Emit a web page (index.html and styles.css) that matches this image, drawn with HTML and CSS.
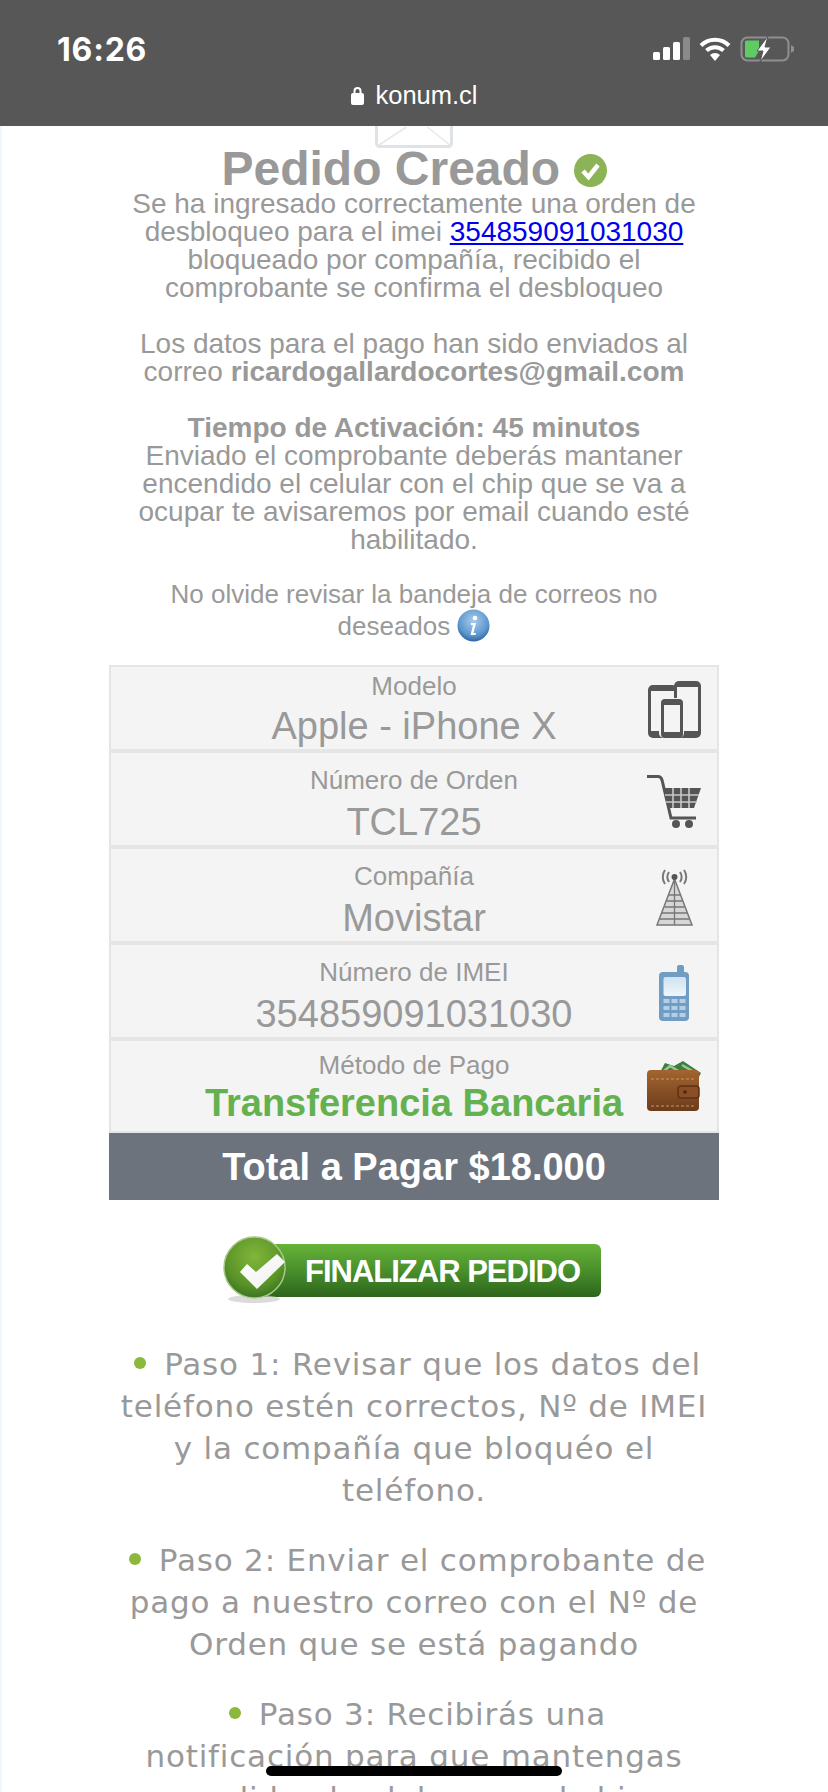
FILE: index.html
```html
<!DOCTYPE html>
<html>
<head>
  <title>Pedido Creado</title>
  <link rel="stylesheet" href="styles.css">
</head>
<body>
  <header class="status-bar">
    <div class="status-top">
      <span class="time">16:26</span>
      <div class="status-icons">
        <svg width="37" height="24" viewBox="0 0 37 24">
          <rect x="0" y="15" width="7" height="8" rx="1.500" fill="#fff"/>
          <rect x="10" y="10" width="7" height="13" rx="1.500" fill="#fff"/>
          <rect x="20" y="5" width="7" height="18" rx="1.500" fill="#fff"/>
          <rect x="30" y="0" width="7" height="23" rx="1.500" fill="#8a8a8a"/>
        </svg>
        <svg width="32" height="24" viewBox="0 0 32 24">
          <path d="M2 8.500 A20 20 0 0 1 30 8.500" fill="none" stroke="#fff" stroke-width="4"/>
          <path d="M7.500 13.500 A12.500 12.500 0 0 1 24.500 13.500" fill="none" stroke="#fff" stroke-width="4"/>
          <path d="M11 18 L16 24 L21 18 A7 7 0 0 0 11 18 Z" fill="#fff"/>
        </svg>
        <svg width="54" height="26" viewBox="0 0 54 26">
          <rect x="1.500" y="1.500" width="47" height="23" rx="6" fill="none" stroke="#8f8f8f" stroke-width="2"/>
          <path d="M51 9 L54 11 V15 L51 17 Z" fill="#8f8f8f"/>
          <path d="M5 6 a1.500 1.500 0 0 1 1.500 -1.500 H19 V15 L15 21.500 H6.500 a1.500 1.500 0 0 1 -1.500 -1.500 Z" fill="#5ecb63"/>
          <path d="M28 0 L17 15 H23 L20 26 L31 11 H25 Z" fill="#fff" stroke="#575757" stroke-width="1"/>
        </svg>
      </div>
    </div>
    <div class="url-row">
      <svg width="13" height="19" viewBox="0 0 13 19">
        <path d="M3.500 8 V5 a3 3 0 0 1 6 0 V8" fill="none" stroke="#fff" stroke-width="2"/>
        <rect x="0" y="7" width="13" height="12" rx="2" fill="#fff"/>
      </svg>
      <span>konum.cl</span>
    </div>
  </header>

  <main class="page">
    <div class="mail-clip">
      <svg class="mail-icon" width="78" height="60" viewBox="0 0 78 60">
        <rect x="1.500" y="1.500" width="75" height="57" rx="3" fill="#fff" stroke="#dfe3e6" stroke-width="3"/>
        <path d="M2.500 58 L31.500 39 M76 58 L52.500 39" fill="none" stroke="#e6e9eb" stroke-width="1.500"/>
      </svg>
    </div>

    <h1 class="title">Pedido Creado
      <svg class="ok-icon" width="33" height="33" viewBox="0 0 33 33">
        <circle cx="16.500" cy="16.500" r="16.500" fill="#8cb356"/>
        <path d="M9 17 L14.500 23 L24 11" fill="none" stroke="#fff" stroke-width="4.500"/>
      </svg>
    </h1>

    <p class="intro">Se ha ingresado correctamente una orden de desbloqueo para el imei <a href="#">354859091031030</a> bloqueado por compañía, recibido el comprobante se confirma el desbloqueo</p>
    <p class="intro">Los datos para el pago han sido enviados al correo <b>ricardogallardocortes@gmail.com</b></p>
    <p class="intro"><b>Tiempo de Activación: 45 minutos</b><br>Enviado el comprobante deberás mantaner encendido el celular con el chip que se va a ocupar te avisaremos por email cuando esté habilitado.</p>
    <p class="note">No olvide revisar la bandeja de correos no deseados
      <svg class="info-icon" width="33" height="33" viewBox="0 0 33 33">
        <defs>
          <radialGradient id="infoFill" cx="50%" cy="35%" r="65%">
            <stop offset="0" stop-color="#a9cdec"/>
            <stop offset="0.7" stop-color="#5f97cf"/>
            <stop offset="1" stop-color="#2e68a5"/>
          </radialGradient>
        </defs>
        <circle cx="16.500" cy="16.500" r="16" fill="url(#infoFill)"/>
        <circle cx="18" cy="9" r="2.300" fill="#fff"/>
        <path d="M14 14 H19 L16.500 24 H19 L18.500 26 H13.500 L16 16 H14 Z" fill="#fff"/>
      </svg>
    </p>

    <section class="order">
      <div class="order-row first">
        <div class="order-text">
          <div class="order-label">Modelo</div>
          <div class="order-value">Apple - iPhone X</div>
        </div>
        <svg class="order-icon" width="53" height="57" viewBox="0 0 53 57">
          <rect x="0" y="4" width="29" height="53" rx="5" fill="#555"/>
          <rect x="3" y="10" width="23" height="40" fill="#f4f4f4"/>
          <rect x="26" y="0" width="27" height="57" rx="5" fill="#555"/>
          <rect x="29" y="6" width="21" height="44" fill="#f4f4f4"/>
          <rect x="11" y="17" width="25" height="40" rx="5" fill="#f4f4f4"/>
          <rect x="13" y="18" width="22" height="39" rx="4" fill="#555"/>
          <rect x="16" y="24" width="16" height="27" fill="#f4f4f4"/>
        </svg>
      </div>
      <div class="order-row">
        <div class="order-text">
          <div class="order-label">Número de Orden</div>
          <div class="order-value">TCL725</div>
        </div>
        <svg class="order-icon" width="54" height="53" viewBox="0 0 54 53">
          <path d="M0 1.500 H11 Q14 1.500 15 5 L24 43 H49" fill="none" stroke="#555" stroke-width="3"/>
          <path d="M16 13 H54 L47 33 H21 Z" fill="#555"/>
          <path d="M18 20 H52 M19 27 H50 M26 13 V33 M34 13 V33 M42 13 V33" stroke="#c9c9c9" stroke-width="1.600"/>
          <circle cx="29" cy="49" r="4" fill="#555"/>
          <circle cx="42" cy="49" r="4" fill="#555"/>
        </svg>
      </div>
      <div class="order-row">
        <div class="order-text">
          <div class="order-label">Compañía</div>
          <div class="order-value">Movistar</div>
        </div>
        <svg class="order-icon" width="37" height="58" viewBox="0 0 37 58">
          <path d="M18.500 11 L1 57 H36 Z" fill="#d6d6d6" stroke="#777" stroke-width="1.500"/>
          <path d="M13 27 H24 M10.500 33 H26.500 M8.500 39 H28.500 M6 45 H31 M4 51 H33 M18.500 11 V57" fill="none" stroke="#777" stroke-width="1.300"/>
          <path d="M9 2 C6 6 6 12 9 16 M28 2 C31 6 31 12 28 16 M13 4 C11 7 11 11 13 14 M24 4 C26 7 26 11 24 14" fill="none" stroke="#777" stroke-width="2"/>
          <circle cx="18.500" cy="9" r="3" fill="#555"/>
        </svg>
      </div>
      <div class="order-row">
        <div class="order-text">
          <div class="order-label">Número de IMEI</div>
          <div class="order-value">354859091031030</div>
        </div>
        <svg class="order-icon" width="30" height="56" viewBox="0 0 30 56">
          <defs>
            <linearGradient id="screenFill" x1="0" y1="0" x2="0" y2="1">
              <stop offset="0" stop-color="#cfe3f0"/>
              <stop offset="1" stop-color="#eef6fb"/>
            </linearGradient>
          </defs>
          <rect x="18" y="0" width="7" height="12" rx="2" fill="#6f9dc4"/>
          <rect x="0" y="7" width="30" height="49" rx="4" fill="#6f9dc4"/>
          <rect x="4.500" y="12" width="22.500" height="19" rx="2" fill="url(#screenFill)"/>
          <g fill="#b7cfe2">
            <rect x="4.500" y="34" width="6" height="4"/><rect x="12.500" y="34" width="6" height="4"/><rect x="20.500" y="34" width="6" height="4"/>
            <rect x="4.500" y="41" width="6" height="4"/><rect x="12.500" y="41" width="6" height="4"/><rect x="20.500" y="41" width="6" height="4"/>
            <rect x="4.500" y="48" width="6" height="4"/><rect x="12.500" y="48" width="6" height="4"/><rect x="20.500" y="48" width="6" height="4"/>
          </g>
        </svg>
      </div>
      <div class="order-row last">
        <div class="order-text small">
          <div class="order-label">Método de Pago</div>
          <div class="order-value pay">Transferencia Bancaria</div>
        </div>
        <svg class="order-icon" width="54" height="50" viewBox="0 0 54 50">
          <defs>
            <linearGradient id="walletFill" x1="0" y1="0" x2="0" y2="1">
              <stop offset="0" stop-color="#a3652f"/>
              <stop offset="1" stop-color="#6c3b1c"/>
            </linearGradient>
          </defs>
          <path d="M12 13 L18 2 L27 5 L36 0 L54 12 L50 20 H12 Z" fill="#3f7d3f"/>
          <path d="M17 10 L23 5 L33 11 M35 4 L47 11" fill="none" stroke="#9cc596" stroke-width="2.500"/>
          <rect x="0" y="9" width="52" height="41" rx="4" fill="url(#walletFill)"/>
          <path d="M4 18 H48 M4 45 H48" stroke="#c99565" stroke-width="1.200" stroke-dasharray="3 2"/>
          <rect x="31" y="25" width="21" height="12" rx="3" fill="#8a4f27" stroke="#5c3014" stroke-width="1.500"/>
          <circle cx="38" cy="31" r="1.800" fill="#4a2710"/>
        </svg>
      </div>
      <div class="order-total">Total a Pagar $18.000</div>
    </section>

    <a class="finish" href="#">
      <svg class="finish-ball" width="64" height="68" viewBox="0 0 64 68">
        <defs>
          <radialGradient id="ballFill" cx="50%" cy="32%" r="68%">
            <stop offset="0" stop-color="#82b63a"/>
            <stop offset="0.7" stop-color="#5a9428"/>
            <stop offset="1" stop-color="#3c7320"/>
          </radialGradient>
          <linearGradient id="tickFill" x1="0" y1="0" x2="1" y2="1">
            <stop offset="0" stop-color="#fff"/>
            <stop offset="0.7" stop-color="#f4f4f4"/>
            <stop offset="1" stop-color="#bfc8b4"/>
          </linearGradient>
        </defs>
        <ellipse cx="31" cy="63" rx="26" ry="4" fill="#ccc" opacity="0.7"/>
        <circle cx="31.500" cy="31.500" r="30.500" fill="url(#ballFill)" stroke="#a8c98c" stroke-width="1.500"/>
        <path d="M17 36 L24 28 L33 36 L54 18 L62 26 L34 53 Z" fill="url(#tickFill)"/>
      </svg>
      <span class="finish-pill">FINALIZAR PEDIDO</span>
    </a>

    <ul class="steps">
      <li>Paso 1: Revisar que los datos del teléfono estén correctos, Nº de IMEI y la compañía que bloquéo el teléfono.</li>
      <li>Paso 2: Enviar el comprobante de pago a nuestro correo con el Nº de Orden que se está pagando</li>
      <li>Paso 3: Recibirás una<br>notificación para que mantengas<br>encendido el celular con el chip en uso</li>
    </ul>
  </main>

  <div class="home-bar"></div>
</body>
</html>
```

FILE: styles.css
```css
html, body {
  height: 1792px;
  overflow: hidden;
}

body {
  margin: 0;
  padding: 0;
  font-family: "Liberation Sans", Arial, sans-serif;
  background-color: #fff;
  box-shadow: inset 2px 0 0 #f0f7fc;
  color: #999;
}

.status-bar {
  height: 126px;
  box-sizing: border-box;
  background-color: #575757;
  color: #fff;
  padding: 32px 34px 0 57px;
}

.status-top {
  display: flex;
  justify-content: space-between;
  align-items: center;
  height: 34px;
}

.time {
  font-family: Inter, sans-serif;
  font-size: 32px;
  font-weight: 700;
  letter-spacing: 0.800px;
}

.status-icons {
  display: flex;
  align-items: center;
  gap: 9px;
}

.url-row {
  display: flex;
  justify-content: center;
  align-items: center;
  gap: 11px;
  margin-top: 15px;
  padding-right: 22px;
  font-size: 25.500px;
}

.page {
  width: 610px;
  margin: 0 auto;
  text-align: center;
}

.mail-clip {
  height: 22px;
  overflow: hidden;
  display: flex;
  justify-content: center;
  align-items: flex-end;
}

.mail-icon {
  flex: none;
}

.title {
  margin: 0;
  font-size: 48px;
  line-height: 42px;
  font-weight: bold;
  white-space: nowrap;
}

.ok-icon {
  vertical-align: -2px;
}

.intro {
  margin: 0 0 28px;
  font-size: 28px;
  line-height: 28px;
  padding: 0 10px;
}

.intro a {
  color: #0000ee;
}

.note {
  margin: -3px 0 23px;
  font-size: 26px;
  line-height: 30px;
  padding: 0 20px;
}

.info-icon {
  vertical-align: -7px;
}

.order-row {
  display: grid;
  grid-template-columns: 86px 1fr 86px;
  align-items: center;
  justify-items: center;
  height: 96px;
  box-sizing: border-box;
  background-color: #f4f4f4;
  border: 2px solid #e5e5e5;
}

.order-row.first {
  height: 86px;
}

.order-row.last {
  height: 94px;
}

.order-text {
  grid-column: 1 / 4;
  grid-row: 1;
  align-self: start;
  padding-top: 12px;
}

.first .order-text {
  padding-top: 4px;
}

.order-text.small {
  padding-top: 9px;
}

.order-icon {
  grid-column: 3;
  grid-row: 1;
  filter: blur(0.6px);
}

.order-label {
  font-size: 26px;
  line-height: 30px;
}

.order-value {
  font-size: 38px;
  line-height: 54px;
}

.first .order-value {
  line-height: 50px;
}

.order-value.pay {
  color: #64b150;
  font-weight: bold;
  line-height: 46px;
}

.order-total {
  background-color: #6c737c;
  color: #fff;
  font-size: 38px;
  font-weight: bold;
  line-height: 65px;
  padding-top: 2px;
}

.finish {
  display: flex;
  align-items: flex-start;
  width: 378px;
  height: 68px;
  margin: 36px 0 0 114px;
  text-decoration: none;
}

.finish-ball {
  position: relative;
  z-index: 1;
  flex: none;
}

.finish-pill {
  flex: 1;
  height: 53px;
  margin: 8px 0 0 -30px;
  padding-left: 48px;
  border-radius: 6px;
  background: linear-gradient(#66b338, #468c2a 55%, #2c651b);
  color: #fff;
  font-size: 31px;
  font-weight: bold;
  letter-spacing: -1px;
  line-height: 55px;
  text-align: left;
  white-space: nowrap;
}

.steps {
  list-style: none;
  margin: 39px 0 0;
  padding: 0;
  font-family: "DejaVu Sans", Verdana, sans-serif;
  font-size: 31px;
  letter-spacing: 0.800px;
  line-height: 42px;
}

.steps li {
  margin-bottom: 28px;
}

.steps li::before {
  content: "";
  display: inline-block;
  width: 12px;
  height: 12px;
  margin: 0 18px 0 7px;
  vertical-align: 6px;
  border-radius: 50%;
  background-color: #8cb83c;
}

.home-bar {
  position: fixed;
  left: 266px;
  top: 1766px;
  width: 296px;
  height: 10px;
  border-radius: 5px;
  background-color: #000;
}
```
